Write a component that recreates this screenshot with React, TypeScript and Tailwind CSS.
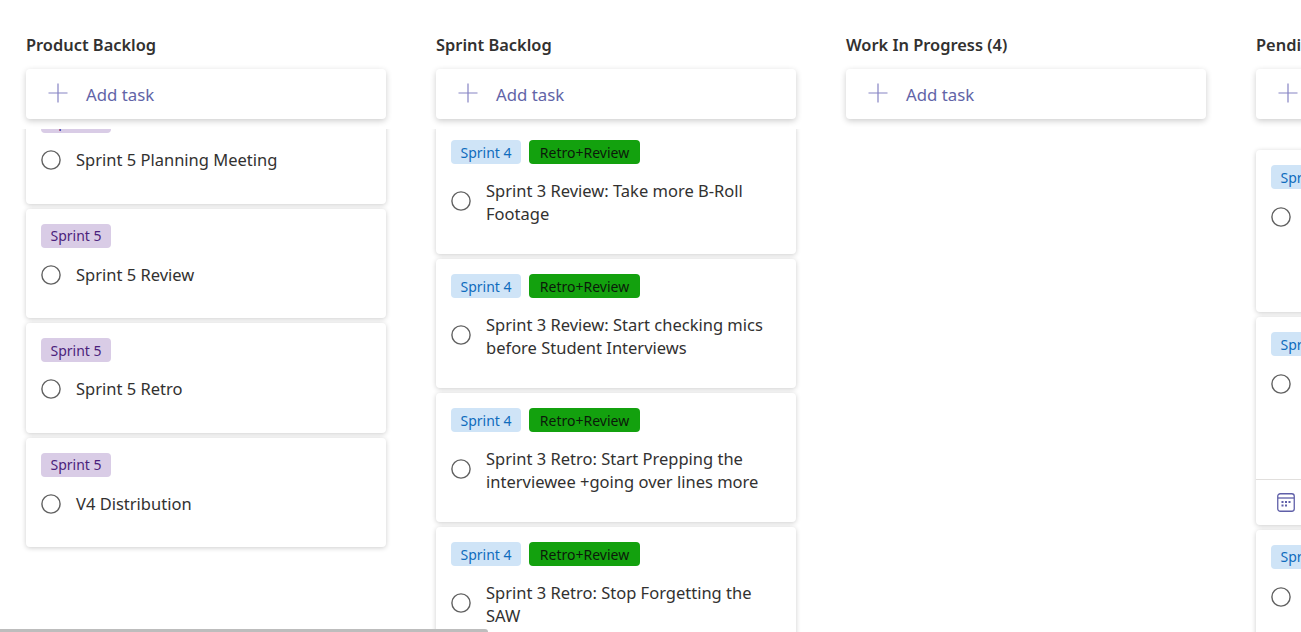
const font = "font-['Noto_Sans',sans-serif]";

type Task = { title: string; tags: string[]; footer?: boolean; tall?: boolean; wrap?: boolean };

const backlog: Task[] = [
  { title: 'Sprint 5 Planning Meeting', tags: ['Sprint 5'] },
  { title: 'Sprint 5 Review', tags: ['Sprint 5'] },
  { title: 'Sprint 5 Retro', tags: ['Sprint 5'] },
  { title: 'V4 Distribution', tags: ['Sprint 5'] },
];

const sprint: Task[] = [
  { title: 'Sprint 3 Review: Take more B-Roll Footage', tags: ['Sprint 4', 'Retro+Review'], wrap: true },
  { title: 'Sprint 3 Review: Start checking mics before Student Interviews', tags: ['Sprint 4', 'Retro+Review'], wrap: true },
  { title: 'Sprint 3 Retro: Start Prepping the interviewee +going over lines more', tags: ['Sprint 4', 'Retro+Review'], wrap: true },
  { title: 'Sprint 3 Retro: Stop Forgetting the SAW', tags: ['Sprint 4', 'Retro+Review'], wrap: true },
];

const pending: Task[] = [
  { title: '', tags: ['Sprint 4'], tall: true },
  { title: '', tags: ['Sprint 4'], tall: true, footer: true },
  { title: '', tags: ['Sprint 4'] },
];

function Tag({ label }: { label: string }) {
  if (label === 'Retro+Review') {
    return <span className="flex h-6 w-[111px] items-center justify-center rounded bg-[#13a10e] text-[14px] text-[#0b1a0a] whitespace-nowrap">{label}</span>;
  }
  if (label === 'Sprint 5') {
    return <span className="flex h-6 w-[70px] items-center justify-center rounded bg-[#d9cce6] text-[14px] text-[#4b1f7c] whitespace-nowrap">{label}</span>;
  }
  return <span className="flex h-6 w-[70px] items-center justify-center rounded bg-[#cfe4f7] text-[14px] text-[#0f6cbd] whitespace-nowrap">{label}</span>;
}

function CalendarIcon() {
  return (
    <svg width="18" height="19" viewBox="0 0 18 19" fill="none" className="text-[#5f5fa8]">
      <rect x="0.75" y="0.75" width="16.5" height="17.5" rx="2.5" stroke="currentColor" strokeWidth="1.3" />
      <path d="M1 5h16" stroke="currentColor" strokeWidth="1.3" />
      <g fill="currentColor">
        <rect x="4.5" y="8" width="2" height="2" />
        <rect x="8" y="8" width="2" height="2" />
        <rect x="11.5" y="8" width="2" height="2" />
        <rect x="4.5" y="11.5" width="2" height="2" />
        <rect x="8" y="11.5" width="2" height="2" />
      </g>
    </svg>
  );
}

function Radio({ className }: { className: string }) {
  return (
    <svg width="20" height="20" viewBox="0 0 20 20" fill="none" className={`shrink-0 ${className}`}>
      <circle cx="10" cy="10" r="9.1" stroke="#616161" strokeWidth="1.4" />
    </svg>
  );
}

function TaskCard({ task }: { task: Task }) {
  return (
    <div className={`mb-[5px] flex flex-col rounded bg-white shadow-[0_1px_5px_rgba(0,0,0,0.2)] ${task.footer ? 'h-[207.5px]' : task.tall ? 'h-[162px]' : 'min-h-[109.5px]'}`}>
      <div className="flex-1 px-[15px] pt-[15px]">
        <div className="flex gap-2">
          {task.tags.map((t) => (
            <Tag key={t} label={t} />
          ))}
        </div>
        <div className={`mt-[15px] flex ${task.title ? 'items-center' : 'items-start'} gap-[15px]`}>
          <Radio className={task.title ? (task.wrap ? 'mb-0.5' : 'mt-px') : 'mt-[3px]'} />
          <span className="text-[16.5px] leading-[23px] text-[#323130]">{task.title}</span>
        </div>
        {task.title && <div className="h-[29px]" />}
      </div>
      {task.footer && (
        <div className="flex h-[46px] items-center border-t border-[#e1dfdd] px-[21px]">
          <CalendarIcon />
        </div>
      )}
    </div>
  );
}

function Column({ title, tasks, offset }: { title: string; tasks: Task[]; offset: string }) {
  return (
    <div className="mr-[50px] flex w-[360px] shrink-0 flex-col">
      <h2 className="mb-3 text-[16.4px] leading-6 font-semibold text-[#323130]">{title}</h2>
      <button className="flex h-[50px] items-center gap-[18px] rounded bg-white pl-[22px] text-left text-[16.8px] text-[#6264a7] shadow-[0_2px_6px_rgba(0,0,0,0.2)]">
        <svg width="20" height="20" viewBox="0 0 20 20" fill="none" className="-mt-0.5">
          <path d="M10 0.5v19M0.5 10h19" stroke="#8583c4" strokeWidth="1.2" />
        </svg>
        <span className="mt-0.5">Add task</span>
      </button>
      <div className="-mx-3 mt-[10px] min-h-0 flex-1 overflow-hidden px-3">
        <div className={offset}>
          {tasks.map((t, i) => (
            <TaskCard key={i} task={t} />
          ))}
        </div>
      </div>
    </div>
  );
}

export default function App() {
  return (
    <div className={`relative flex h-screen w-screen overflow-hidden bg-white pt-[33px] pl-[26px] ${font}`}>
      <Column title="Product Backlog" tasks={backlog} offset="-mt-[34.52px]" />
      <Column title="Sprint Backlog" tasks={sprint} offset="-mt-[4px]" />
      <Column title="Work In Progress (4)" tasks={[]} offset="" />
      <Column title="Pending" tasks={pending} offset="mt-[21px]" />
      {/* horizontal scrollbar */}
      <div className="absolute bottom-0 left-0 h-[3px] w-[488px] rounded-tr-sm bg-[#bdbdbd]" />
    </div>
  );
}
